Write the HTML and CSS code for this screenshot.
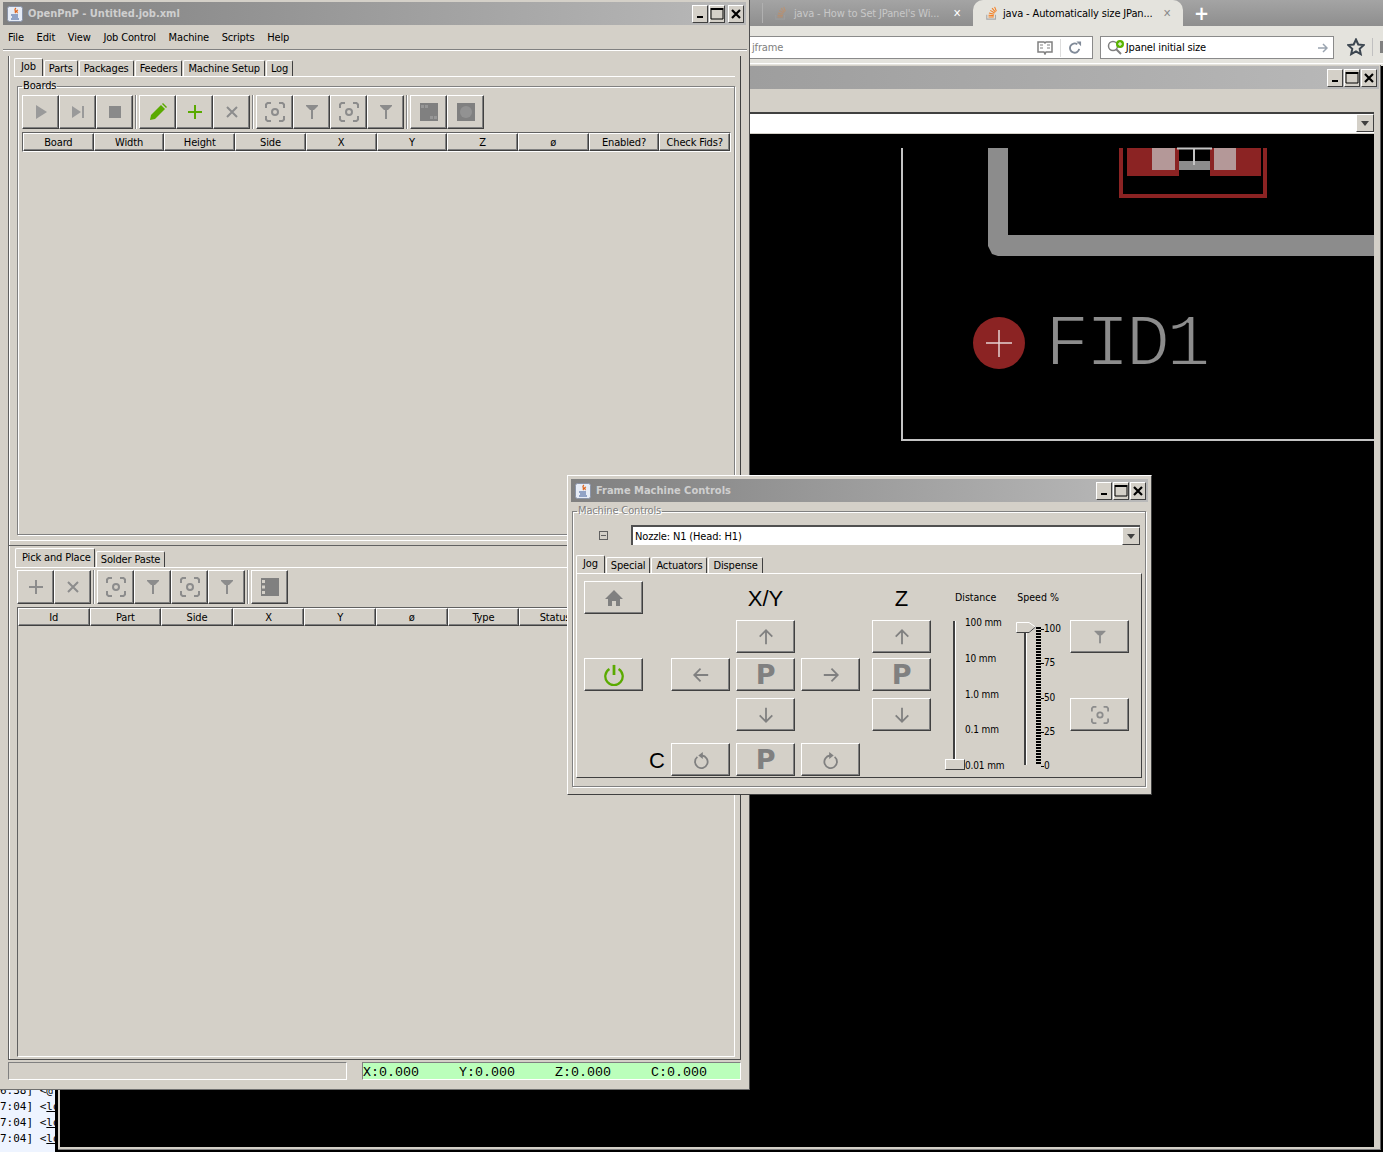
FILE: index.html
```html
<!DOCTYPE html>
<html lang="en">
<head>
    <meta charset="UTF-8">
    <title>OpenPnP - Untitled.job.xml</title>
    <link rel="stylesheet" href="styles.css">
</head>
<body>
    <!-- icon set -->
    <svg class="defs" width="0" height="0">
      <symbol id="i-play" viewBox="0 0 20 20"><path d="M5 3l11 7-11 7z" fill="#9a9a9a"/></symbol>
      <symbol id="i-step" viewBox="0 0 20 20"><path d="M4 4l9 6-9 6z" fill="#9a9a9a"/><rect x="14" y="4" width="2" height="12" fill="#9a9a9a"/></symbol>
      <symbol id="i-stop" viewBox="0 0 20 20"><rect x="4" y="4" width="12" height="12" fill="#8a8a8a"/></symbol>
      <symbol id="i-pencil" viewBox="0 0 20 20"><path d="M2 18l1-5L13 3l4 4L7 17z" fill="#5aaa00"/><path d="M14 2l1-1 4 4-1 1z" fill="#5aaa00"/></symbol>
      <symbol id="i-plus" viewBox="0 0 20 20"><path d="M10 3v14M3 10h14" stroke="#5aaa00" stroke-width="2" fill="none"/></symbol>
      <symbol id="i-plus-off" viewBox="0 0 20 20"><path d="M10 3v14M3 10h14" stroke="#8c8c8c" stroke-width="2" fill="none"/></symbol>
      <symbol id="i-x" viewBox="0 0 20 20"><path d="M5 5l10 10M15 5L5 15" stroke="#8c8c8c" stroke-width="2" fill="none"/></symbol>
      <symbol id="i-cam" viewBox="0 0 20 20"><path d="M1 6V2.500L2.500 1H6M14 1h3.500L19 2.500V6M19 14v3.500L17.500 19H14M6 19H2.500L1 17.500V14" stroke="#8c8c8c" stroke-width="2" fill="none"/><circle cx="10" cy="10" r="3" stroke="#8c8c8c" stroke-width="2" fill="none"/></symbol>
      <symbol id="i-nozzle" viewBox="0 0 20 20"><path d="M4 3h12v1l-4 4H8L4 4z" fill="#8c8c8c"/><rect x="9" y="7" width="2" height="10" fill="#8c8c8c"/></symbol>
      <symbol id="i-board" viewBox="0 0 20 20"><rect x="1" y="1" width="18" height="18" fill="#808080"/><path d="M2 3h3v3H2zM6 3h3v3H6zM11 14h3v3h-3zM15 14h3v3h-3z" fill="#979797"/></symbol>
      <symbol id="i-disc" viewBox="0 0 20 20"><rect x="1" y="1" width="18" height="18" fill="#808080"/><circle cx="10" cy="10" r="6" fill="#929292"/></symbol>
      <symbol id="i-film" viewBox="0 0 20 20"><rect x="1" y="1" width="18" height="18" fill="#808080"/><path d="M2 3h3v3H2zM2 8.500h3v3H2zM2 14h3v3H2z" fill="#d4d0c8"/></symbol>
      <symbol id="i-home" viewBox="0 0 20 20"><path d="M10 2L1 11h3v7h4v-5h4v5h4v-7h3z" fill="#808080"/></symbol>
      <symbol id="i-power" viewBox="0 0 24 24"><path d="M7 5.500a9.500 9.500 0 1 0 10 0" stroke="#5aaa00" stroke-width="2.500" fill="none"/><path d="M12 1v11" stroke="#5aaa00" stroke-width="3" fill="none"/></symbol>
      <symbol id="i-up" viewBox="0 0 20 20"><path d="M10 18V3M3 9.500L10 2.500l7 7" stroke="#808080" stroke-width="2" fill="none"/></symbol>
      <symbol id="i-down" viewBox="0 0 20 20"><path d="M10 2v15M3 10.500l7 7 7-7" stroke="#808080" stroke-width="2" fill="none"/></symbol>
      <symbol id="i-left" viewBox="0 0 20 20"><path d="M18 10H3M9.500 3L2.500 10l7 7" stroke="#808080" stroke-width="2" fill="none"/></symbol>
      <symbol id="i-right" viewBox="0 0 20 20"><path d="M2 10h15M10.500 3l7 7-7 7" stroke="#808080" stroke-width="2" fill="none"/></symbol>
      <symbol id="i-ccw" viewBox="0 0 20 20"><path d="M6 6.500a7 7 0 1 0 5-1.500" stroke="#808080" stroke-width="2" fill="none"/><path d="M12 1v8L7 5z" fill="#808080"/></symbol>
      <symbol id="i-cw" viewBox="0 0 20 20"><path d="M14 6.500a7 7 0 1 1-5-1.500" stroke="#808080" stroke-width="2" fill="none"/><path d="M8 1v8l5-4z" fill="#808080"/></symbol>
      <symbol id="i-min" viewBox="0 0 14 14"><rect x="4" y="9" width="6" height="2" fill="#000"/></symbol>
      <symbol id="i-max" viewBox="0 0 14 14"><path d="M1 1.500h12M1 1v11h12V1" stroke="#000" stroke-width="1" fill="none"/><rect x="1" y="1" width="12" height="2" fill="#000"/></symbol>
      <symbol id="i-close" viewBox="0 0 14 14"><path d="M3 3l8 8M11 3l-8 8" stroke="#000" stroke-width="2.200" fill="none"/></symbol>
      <symbol id="i-java" viewBox="0 0 16 16"><rect x="0.500" y="0.500" width="15" height="15" rx="2" fill="#e6ecf6" stroke="#8a94a8"/><path d="M9 2c-3 2 1 3-1 5M11 4c-3 1 0 2-1 3" stroke="#e0641a" stroke-width="1.300" fill="none"/><path d="M4 9h7M5 11h6M4 13h8" stroke="#3c5a96" stroke-width="1" fill="none"/></symbol>
      <symbol id="i-so" viewBox="0 0 16 16"><path d="M2 10v5h10v-5" stroke="#a8a8a8" stroke-width="1.200" fill="none"/><path d="M4 12.500h6M4 10.500l6 .5M4.500 8l6 1.500M6 5l5 3M8 2.500l4 4.500M11 1l2 5" stroke="#f48024" stroke-width="1.200" fill="none"/></symbol>
    </svg>

    <!-- browser behind everything -->
    <div class="browser">
      <div class="tab-strip">
        <span class="tab-sep"></span>
        <svg class="so-dim"><use href="#i-so"/></svg>
        <span class="tab-title-dim">java - How to Set JPanel's Wi...</span>
        <span class="tab-x-white">✕</span>
        <div class="tab-active">
          <svg class="so-icon"><use href="#i-so"/></svg>
          <span class="tab-title">java - Automatically size JPan...</span>
          <span class="tab-x-gray">✕</span>
        </div>
        <span class="tab-plus">+</span>
      </div>
      <div class="nav-bar">
        <div class="url-box">
          <span class="url-text">jframe</span>
          <svg class="url-reader" viewBox="0 0 16 14"><path d="M1 1h6l1 1 1-1h6v10H9l-1 2-1-2H1z" fill="none" stroke="#808080" stroke-width="1.500"/><path d="M3 4h3M3 7h3M10 4h3M10 7h3" stroke="#808080"/></svg>
          <span class="url-sep"></span>
          <svg class="url-reload" viewBox="0 0 14 14"><path d="M11 8a5 5 0 1 1-2-5" fill="none" stroke="#808a98" stroke-width="2"/><path d="M8 0h5v5z" fill="#808a98"/></svg>
        </div>
        <div class="search-box">
          <svg class="search-icon" viewBox="0 0 18 16"><circle cx="6" cy="6" r="4.500" fill="none" stroke="#808080" stroke-width="1.500"/><path d="M9 9l5 5" stroke="#808080" stroke-width="2"/><circle cx="13" cy="4" r="4" fill="#5ab400"/><path d="M13 2v4M11 4h4" stroke="#fff"/></svg>
          <span class="search-text">Jpanel initial size</span>
          <svg class="search-go" viewBox="0 0 10 10"><path d="M0 5h8M5 1l4 4-4 4" fill="none" stroke="#9aa4b0" stroke-width="1.500"/></svg>
        </div>
        <svg class="star" viewBox="0 0 18 18"><path d="M9 1.500l2.300 5 5.400.6-4 3.700 1.100 5.400L9 13.500l-4.800 2.700 1.100-5.400-4-3.700 5.400-.6z" fill="none" stroke="#3c4650" stroke-width="2"/></svg>
        <span class="nav-sep"></span>
        <span class="nav-stub"></span>
      </div>
    </div>

    <!-- irc log peeking out at the bottom left -->
    <div class="irc-log">
      <div>6:38] &lt;@</div>
      <div>7:04] &lt;<u>lo</u></div>
      <div>7:04] &lt;<u>lo</u></div>
      <div>7:04] &lt;<u>lo</u></div>
    </div>

    <!-- window behind with the pcb view -->
    <div class="back-win">
      <div class="title-bar back-title">
        <span class="win-buttons">
          <span class="wbtn"><svg><use href="#i-min"/></svg></span>
          <span class="wbtn"><svg><use href="#i-max"/></svg></span>
          <span class="wbtn"><svg><use href="#i-close"/></svg></span>
        </span>
      </div>
      <div class="back-combo"><span class="combo-arrow"></span></div>
      <svg class="pcb" viewBox="60 134 1314 1013">
        <path d="M902 148V440H1374" fill="none" stroke="#c4c4c4" stroke-width="2"/>
        <path d="M988 148h20v87h366v21H998l-6-2-4-8z" fill="#8c8c8c"/>
        <path d="M1121 148v48h144v-48" fill="none" stroke="#8b2323" stroke-width="4"/>
        <rect x="1127" y="148" width="52" height="28" fill="#8b2323"/>
        <rect x="1210" y="148" width="51" height="28" fill="#8b2323"/>
        <rect x="1152" y="148" width="23" height="22" fill="#b49898"/>
        <rect x="1214" y="148" width="22" height="22" fill="#b49898"/>
        <rect x="1175" y="148" width="4" height="13" fill="#8b2323"/>
        <rect x="1210" y="148" width="4" height="13" fill="#8b2323"/>
        <rect x="1179" y="161" width="31" height="9" fill="#8c8c8c"/>
        <path d="M1177 148.500h35M1194 148v17" stroke="#c4c4c4" stroke-width="2" fill="none"/>
        <circle cx="999" cy="343" r="26" fill="#8b2323"/>
        <path d="M986 343h26M999 330v27" stroke="#e6d2d2" stroke-width="1.500" fill="none"/>
        <text class="fid" x="1045" y="365">FID1</text>
      </svg>
    </div>

    <!-- main window -->
    <div class="main-win">
      <div class="title-bar">
        <svg class="java-icon"><use href="#i-java"/></svg>
        <span class="title-text">OpenPnP - Untitled.job.xml</span>
        <span class="win-buttons">
          <span class="wbtn"><svg><use href="#i-min"/></svg></span>
          <span class="wbtn"><svg><use href="#i-max"/></svg></span>
          <span class="wbtn wbtn-close"><svg><use href="#i-close"/></svg></span>
        </span>
      </div>
      <div class="menu-bar">
        <span>File</span><span>Edit</span><span>View</span><span>Job Control</span><span>Machine</span><span>Scripts</span><span>Help</span>
      </div>

      <div class="split">
        <div class="pane pane-top">
          <div class="tabs">
            <span class="tab tab-on">Job</span><span class="tab">Parts</span><span class="tab">Packages</span><span class="tab">Feeders</span><span class="tab">Machine Setup</span><span class="tab">Log</span>
          </div>
          <div class="tab-panel">
            <fieldset class="titled">
              <legend>Boards</legend>
              <div class="toolbar">
                <span class="tbtn"><svg><use href="#i-play"/></svg></span>
                <span class="tbtn"><svg><use href="#i-step"/></svg></span>
                <span class="tbtn"><svg><use href="#i-stop"/></svg></span>
                <span class="tsep"></span>
                <span class="tbtn"><svg><use href="#i-pencil"/></svg></span>
                <span class="tbtn"><svg><use href="#i-plus"/></svg></span>
                <span class="tbtn"><svg><use href="#i-x"/></svg></span>
                <span class="tsep"></span>
                <span class="tbtn"><svg><use href="#i-cam"/></svg></span>
                <span class="tbtn"><svg><use href="#i-nozzle"/></svg></span>
                <span class="tbtn"><svg><use href="#i-cam"/></svg></span>
                <span class="tbtn"><svg><use href="#i-nozzle"/></svg></span>
                <span class="tsep"></span>
                <span class="tbtn"><svg><use href="#i-board"/></svg></span>
                <span class="tbtn"><svg><use href="#i-disc"/></svg></span>
              </div>
              <div class="table-pane">
                <div class="thead">
                  <span>Board</span><span>Width</span><span>Height</span><span>Side</span><span>X</span><span>Y</span><span>Z</span><span>ø</span><span>Enabled?</span><span>Check Fids?</span>
                </div>
              </div>
            </fieldset>
          </div>
        </div>

        <div class="divider"></div>

        <div class="pane pane-bottom">
          <div class="tabs tabs-low">
            <span class="tab tab-on">Pick and Place</span><span class="tab">Solder Paste</span>
          </div>
          <div class="tab-panel tab-panel-low">
            <div class="toolbar">
              <span class="tbtn"><svg><use href="#i-plus-off"/></svg></span>
              <span class="tbtn"><svg><use href="#i-x"/></svg></span>
              <span class="tsep"></span>
              <span class="tbtn"><svg><use href="#i-cam"/></svg></span>
              <span class="tbtn"><svg><use href="#i-nozzle"/></svg></span>
              <span class="tbtn"><svg><use href="#i-cam"/></svg></span>
              <span class="tbtn"><svg><use href="#i-nozzle"/></svg></span>
              <span class="tsep"></span>
              <span class="tbtn"><svg><use href="#i-film"/></svg></span>
            </div>
            <div class="table-pane">
              <div class="thead">
                <span>Id</span><span>Part</span><span>Side</span><span>X</span><span>Y</span><span>ø</span><span>Type</span><span>Status</span><span>Check Fids?</span><span>Enabled?</span>
              </div>
            </div>
          </div>
        </div>
      </div>

      <div class="status-bar">
        <div class="status-msg"></div>
        <div class="status-dro">X:0.000     Y:0.000     Z:0.000     C:0.000</div>
      </div>
    </div>

    <!-- floating machine controls -->
    <div class="ctl-win">
      <div class="title-bar">
        <svg class="java-icon"><use href="#i-java"/></svg>
        <span class="title-text">Frame Machine Controls</span>
        <span class="win-buttons">
          <span class="wbtn"><svg><use href="#i-min"/></svg></span>
          <span class="wbtn"><svg><use href="#i-max"/></svg></span>
          <span class="wbtn"><svg><use href="#i-close"/></svg></span>
        </span>
      </div>
      <fieldset class="titled titled-ctl">
        <legend>Machine Controls</legend>
        <div class="combo-row">
          <span class="collapse-box"></span>
          <div class="combo">Nozzle: N1 (Head: H1)<span class="combo-arrow"></span></div>
        </div>
        <div class="tabs tabs-ctl">
          <span class="tab tab-on">Jog</span><span class="tab">Special</span><span class="tab">Actuators</span><span class="tab">Dispense</span>
        </div>
        <div class="jog-panel">
          <span class="jbtn at-home"><svg class="ic-20"><use href="#i-home"/></svg></span>
          <span class="axis at-xy">X/Y</span>
          <span class="axis at-z">Z</span>

          <span class="jbtn at-xy-up"><svg class="ic-18"><use href="#i-up"/></svg></span>
          <span class="jbtn at-z-up"><svg class="ic-18"><use href="#i-up"/></svg></span>

          <span class="jbtn at-power"><svg class="ic-22"><use href="#i-power"/></svg></span>
          <span class="jbtn at-xy-left"><svg class="ic-18"><use href="#i-left"/></svg></span>
          <span class="jbtn at-xy-park jp">P</span>
          <span class="jbtn at-xy-right"><svg class="ic-18"><use href="#i-right"/></svg></span>
          <span class="jbtn at-z-park jp">P</span>

          <span class="jbtn at-xy-down"><svg class="ic-18"><use href="#i-down"/></svg></span>
          <span class="jbtn at-z-down"><svg class="ic-18"><use href="#i-down"/></svg></span>

          <span class="axis at-c">C</span>
          <span class="jbtn at-c-ccw"><svg class="ic-18"><use href="#i-ccw"/></svg></span>
          <span class="jbtn at-c-park jp">P</span>
          <span class="jbtn at-c-cw"><svg class="ic-18"><use href="#i-cw"/></svg></span>

          <div class="sliders">
            <div class="slider-heads"><span>Distance</span><span>Speed %</span></div>
            <div class="slider-body">
              <div class="dist-slider">
                <span class="track"></span>
                <span class="thumb-h"></span>
                <div class="dist-labels"><span>100 mm</span><span>10 mm</span><span>1.0 mm</span><span>0.1 mm</span><span>0.01 mm</span></div>
              </div>
              <div class="speed-slider">
                <span class="track"></span>
                <svg class="thumb-v" viewBox="0 0 20 11"><path d="M0.500 0.500H13L19.500 5 13 10.500H0.500z" fill="#d4d0c8" stroke="#fff"/><path d="M0.500 10.500H13L19.500 5" fill="none" stroke="#404040"/></svg>
                <span class="ticks"></span>
                <div class="speed-labels"><span>100</span><span>75</span><span>50</span><span>25</span><span>0</span></div>
              </div>
            </div>
          </div>

          <span class="jbtn at-side-nozzle"><svg class="ic-18"><use href="#i-nozzle"/></svg></span>
          <span class="jbtn at-side-cam"><svg class="ic-18"><use href="#i-cam"/></svg></span>
        </div>
      </fieldset>
    </div>
</body>
</html>
```

FILE: styles.css
```css
* {
    box-sizing: border-box;
}
body {
    margin: 0;
    width: 1383px;
    height: 1152px;
    position: relative;
    overflow: hidden;
    background-color: #000;
    font-family: "DejaVu Sans Condensed", "DejaVu Sans", sans-serif;
    font-stretch: condensed;
    font-size: 11px;
    letter-spacing: -0.15px;
    color: #000;
}
.defs {
    position: absolute;
}

/* browser chrome */
.browser {
    position: absolute;
    left: 0;
    top: 0;
    width: 1383px;
    height: 66px;
    display: flex;
    flex-direction: column;
    background-color: #e4e3dd;
}
.tab-strip {
    height: 26px;
    display: flex;
    align-items: center;
    padding-left: 762px;
    background: linear-gradient(#a4a4a4, #8e8e8e);
}
.tab-sep {
    width: 1px;
    height: 20px;
    background-color: #b0b0b0;
}
.so-dim {
    width: 14px;
    height: 16px;
    margin-left: 11px;
    opacity: 0.35;
}
.tab-title-dim {
    width: 150px;
    margin-left: 6px;
    color: #c8c8c8;
    white-space: nowrap;
}
.tab-x-white {
    width: 12px;
    margin-left: 9px;
    color: #fff;
    font-size: 11px;
    font-weight: bold;
}
.tab-active {
    width: 210px;
    height: 26px;
    margin-left: 8px;
    display: flex;
    align-items: center;
    padding-left: 12px;
    border-radius: 10px 10px 0 0;
    background-color: #e4e3dd;
}
.so-icon {
    width: 14px;
    height: 16px;
}
.tab-title {
    width: 152px;
    margin-left: 4px;
    white-space: nowrap;
}
.tab-x-gray {
    margin-left: 8px;
    color: #8a8a8a;
    font-weight: bold;
}
.tab-plus {
    margin-left: 11px;
    color: #fff;
    font-size: 20px;
    font-weight: bold;
    line-height: 20px;
}
.nav-bar {
    height: 38px;
    display: flex;
    align-items: flex-start;
    padding: 10px 0 0 700px;
    border-bottom: 1px solid #fff;
}
.url-box, .search-box {
    height: 23px;
    display: flex;
    align-items: center;
    background-color: #fff;
    border: 1px solid #8a8a8a;
}
.url-box {
    width: 394px;
    padding-left: 51px;
}
.url-text {
    color: #808080;
    width: 285px;
}
.url-reader {
    width: 16px;
    height: 14px;
}
.url-sep {
    width: 1px;
    height: 18px;
    margin-left: 7px;
    background-color: #ddd;
}
.url-reload {
    width: 13px;
    height: 14px;
    margin-left: 8px;
}
.search-box {
    width: 235px;
    margin-left: 7px;
    padding-left: 6px;
}
.search-icon {
    width: 18px;
    height: 16px;
}
.search-text {
    width: 192px;
    margin-left: 1px;
}
.search-go {
    width: 10px;
    height: 10px;
}
.star {
    width: 18px;
    height: 18px;
    margin: 2px 0 0 13px;
}
.nav-sep {
    width: 1px;
    height: 18px;
    margin: 2px 0 0 7px;
    background-color: #c0c0c0;
}
.nav-stub {
    width: 3px;
    height: 12px;
    margin: 5px 0 0 7px;
    background-color: #808080;
}

/* log strip */
.irc-log {
    position: absolute;
    left: 0;
    top: 1083px;
    width: 55px;
    height: 69px;
    overflow: hidden;
    background-color: #eef4ff;
    font-family: "DejaVu Sans Mono", monospace;
    font-stretch: normal;
    font-size: 11px;
    letter-spacing: 0;
    line-height: 16px;
    white-space: nowrap;
}

/* back window */
.back-win {
    position: absolute;
    left: 58px;
    top: 65px;
    width: 1323px;
    height: 1085px;
    display: flex;
    flex-direction: column;
    padding: 1px 6px 2px 2px;
    background-color: #d4d0c8;
    border-right: 1px solid #606060;
    border-bottom: 1px solid #808080;
}
.title-bar {
    height: 23px;
    flex: none;
    display: flex;
    align-items: center;
    padding-left: 4px;
    background: linear-gradient(to right, #808080, #b9b9b9);
}
.back-title {
    margin-right: -5px;
}
.win-buttons {
    margin-left: auto;
    margin-right: 2px;
    display: flex;
    gap: 1px;
}
.wbtn {
    width: 16px;
    height: 18px;
    display: flex;
    align-items: center;
    justify-content: center;
    border: 1px solid;
    border-color: #fff #404040 #404040 #fff;
    background-color: #d4d0c8;
}
.wbtn svg {
    width: 14px;
    height: 14px;
}
.wbtn-close {
    margin-left: 2px;
}
.back-combo {
    height: 22px;
    flex: none;
    margin-top: 23px;
    display: flex;
    justify-content: flex-end;
    background-color: #fff;
    border-top: 2px solid #404040;
    border-bottom: 1px solid #d4d0c8;
}
.combo-arrow {
    width: 18px;
    height: 18px;
    display: flex;
    align-items: center;
    justify-content: center;
    background-color: #d4d0c8;
    border: 1px solid;
    border-color: #fff #404040 #404040 #fff;
}
.combo-arrow::after {
    content: "";
    border-left: 4px solid transparent;
    border-right: 4px solid transparent;
    border-top: 5px solid #404040;
}
.pcb {
    flex: 1;
    display: block;
    width: 100%;
    min-height: 0;
    background-color: #000;
}
/* black outline thins the glyphs down to the plotted stroke width */
.fid {
    font-family: "Liberation Mono", monospace;
    font-stretch: normal;
    font-size: 74px;
    fill: #8c8c8c;
    stroke: #000;
    stroke-width: 2px;
    letter-spacing: -4px;
}

/* main window */
.main-win {
    position: absolute;
    left: 0;
    top: 0;
    width: 750px;
    height: 1090px;
    padding: 2px 3px 0 3px;
    background-color: #d4d0c8;
    border-right: 1px solid #505050;
    border-bottom: 1px solid #707070;
}
.java-icon {
    width: 16px;
    height: 16px;
    flex: none;
}
.title-text {
    margin-left: 5px;
    color: #cfcfcf;
    font-weight: bold;
    font-size: 11px;
    letter-spacing: 0;
    white-space: nowrap;
}
.menu-bar {
    height: 25px;
    display: flex;
    align-items: center;
    gap: 12.700px;
    padding-left: 5px;
    margin-right: -1px;
    border-bottom: 1px solid #808080;
    box-shadow: 0 1px 0 #fff;
}
.split {
    height: 1004px;
    margin: 6px 5px 0 5px;
    display: flex;
    flex-direction: column;
    border-left: 1px solid #606060;
    border-right: 1px solid #404040;
    border-bottom: 1px solid #505050;
    box-shadow: inset 1px 0 0 #fff;
}
.pane {
    display: flex;
    flex-direction: column;
}
.pane-top {
    height: 484px;
    padding: 2px 5px 0 5px;
}
.divider {
    height: 6px;
    flex: none;
    border-top: 1px solid #fff;
    border-bottom: 1px solid #606060;
}
.pane-bottom {
    flex: 1;
    min-height: 0;
    padding: 2px 3px 2px 6px;
}
.tabs {
    height: 18px;
    flex: none;
    display: flex;
    align-items: flex-end;
}
.tab {
    height: 16px;
    padding: 0 4px;
    margin-right: 1px;
    line-height: 16px;
    border: 1px solid;
    border-width: 1px 1px 0 1px;
    border-color: #fff #404040 #fff #fff;
    border-radius: 2px 2px 0 0;
    white-space: nowrap;
}
.tab-on {
    height: 18px;
    padding: 0 6px;
}
.tab-panel {
    flex: 1;
    min-height: 0;
    display: flex;
    flex-direction: column;
    padding: 0 0 5px 3px;
    border-top: 1px solid #fff;
}
.titled {
    flex: 1;
    min-height: 0;
    min-width: 0;
    display: flex;
    flex-direction: column;
    margin: 2px 0 0 0;
    padding: 2px 4px 0 4px;
    border: 1px solid #808080;
    box-shadow: inset 1px 1px 0 #fff, 1px 1px 0 #fff;
}
.titled legend {
    padding: 0 1px;
    margin-left: 0;
    line-height: 14px;
}
.toolbar {
    height: 34px;
    flex: none;
    display: flex;
}
.tbtn {
    width: 37px;
    height: 34px;
    display: flex;
    align-items: center;
    justify-content: center;
    border: 1px solid;
    border-color: #fff #404040 #404040 #fff;
    box-shadow: inset -1px -1px 0 #808080;
}
.tbtn svg {
    width: 20px;
    height: 20px;
}
.tsep {
    width: 6px;
    flex: none;
    background: linear-gradient(to right, transparent 2px, #808080 2px, #808080 3px, #fff 3px, #fff 4px, transparent 4px);
}
.table-pane {
    flex: 1;
    min-height: 0;
    margin: 3px -1px 0 0;
    border: 1px solid;
    border-color: #606060 #fff #fff #606060;
}
.thead {
    display: flex;
    height: 18px;
}
.thead span {
    flex: 1 1 0;
    min-width: 0;
    text-align: center;
    line-height: 17px;
    white-space: nowrap;
    border: 1px solid;
    border-color: #fff #404040 #404040 #fff;
    box-shadow: inset -1px -1px 0 #808080;
}

/* lower pane */
.tabs-low {
    height: 19px;
}
.tabs-low .tab-on {
    height: 19px;
    padding: 0 3px 0 6px;
    line-height: 17px;
}
.tab-panel-low {
    padding: 2px 3px 0 2px;
}
.status-bar {
    display: flex;
    gap: 15px;
    height: 18px;
    margin: 2px 5px 0 5px;
}
.status-msg, .status-dro {
    border: 1px solid;
    border-color: #808080 #fff #fff #808080;
}
.status-msg {
    width: 339px;
}
.status-dro {
    flex: 1;
    background-color: #bbffbb;
    font-family: "Liberation Mono", monospace;
    font-stretch: normal;
    font-size: 13.330px;
    letter-spacing: 0;
    line-height: 19px;
    white-space: pre;
}

/* machine controls window */
.ctl-win {
    position: absolute;
    left: 567px;
    top: 475px;
    width: 585px;
    height: 320px;
    padding: 3px 3px 0 3px;
    background-color: #d4d0c8;
    border: 1px solid;
    border-color: #fff #404040 #404040 #fff;
    display: flex;
    flex-direction: column;
}
.titled-ctl {
    margin: 2px 2px 7px 1px;
    padding: 7px 3px 8px 3px;
}
.titled-ctl legend {
    color: #808080;
    text-shadow: 1px 1px 0 #fff;
    margin-left: 1px;
}
.combo-row {
    height: 20px;
    flex: none;
    display: flex;
    align-items: center;
    padding-left: 23px;
}
.collapse-box {
    width: 9px;
    height: 9px;
    border: 1px solid #606060;
    background: linear-gradient(#606060, #606060) center / 5px 1px no-repeat;
}
.combo {
    width: 509px;
    height: 20px;
    margin-left: 23px;
    display: flex;
    align-items: center;
    justify-content: space-between;
    padding-left: 2px;
    background-color: #fff;
    border-top: 2px solid #505050;
    border-left: 2px solid #505050;
}
.tabs-ctl {
    height: 18px;
    margin-top: 10px;
}
.jog-panel {
    flex: 1;
    min-height: 0;
    display: grid;
    grid-template-columns: 59px 28px 59px 6px 59px 6px 59px 12px 59px 139px 59px;
    grid-template-rows: 39px 38px 40px 45px 33px;
    padding: 7px 0 0 7px;
    border: 1px solid;
    border-color: #fff #404040 #404040 #fff;
}
.jbtn {
    height: 33px;
    display: flex;
    align-items: center;
    justify-content: center;
    border: 1px solid;
    border-color: #fff #404040 #404040 #fff;
    box-shadow: inset -1px -1px 0 #808080;
}
.ic-18 {
    width: 18px;
    height: 18px;
}
.ic-20 {
    width: 20px;
    height: 20px;
}
.ic-22 {
    width: 22px;
    height: 22px;
}
.jp {
    color: #808080;
    font-family: "DejaVu Sans", sans-serif;
    font-stretch: normal;
    font-weight: bold;
    font-size: 27px;
    line-height: 30px;
}
.axis {
    font-family: "Liberation Sans", sans-serif;
    font-stretch: normal;
    font-size: 22px;
    letter-spacing: 0;
    text-align: center;
    line-height: 35px;
}
.at-home { grid-area: 1 / 1; }
.at-xy { grid-area: 1 / 5; }
.at-z { grid-area: 1 / 9; }
.at-xy-up { grid-area: 2 / 5; }
.at-z-up { grid-area: 2 / 9; }
.at-power { grid-area: 3 / 1; }
.at-xy-left { grid-area: 3 / 3; }
.at-xy-park { grid-area: 3 / 5; }
.at-xy-right { grid-area: 3 / 7; }
.at-z-park { grid-area: 3 / 9; }
.at-xy-down { grid-area: 4 / 5; }
.at-z-down { grid-area: 4 / 9; }
.at-c { grid-area: 5 / 2; margin-right: 6px; text-align: right; }
.at-c-ccw { grid-area: 5 / 3; }
.at-c-park { grid-area: 5 / 5; }
.at-c-cw { grid-area: 5 / 7; }
.at-side-nozzle { grid-area: 2 / 11; }
.at-side-cam { grid-area: 4 / 11; }

/* sliders in the jog panel */
.sliders {
    grid-area: 1 / 10 / 6 / 11;
    display: flex;
    flex-direction: column;
    font-size: 10px;
}
.slider-heads {
    height: 32px;
    padding: 9px 0 0 24px;
    display: flex;
    gap: 21px;
    line-height: 14px;
    font-size: 10.500px;
    letter-spacing: 0;
}
.slider-body {
    position: relative;
    display: flex;
    height: 165px;
}
.dist-slider {
    width: 85px;
    position: relative;
    height: 165px;
    padding: 5px 0 0 34px;
}
.dist-labels {
    height: 157px;
    display: flex;
    flex-direction: column;
    justify-content: space-between;
    line-height: 14px;
}
.track {
    position: absolute;
    width: 2px;
    background-color: #404040;
    box-shadow: 1px 0 0 #fff;
}
.dist-slider .track {
    left: 22px;
    top: 10px;
    height: 140px;
}
.thumb-h {
    position: absolute;
    left: 14px;
    top: 148px;
    width: 20px;
    height: 11px;
    background-color: #d4d0c8;
    border: 1px solid;
    border-color: #fff #404040 #404040 #fff;
}
.speed-slider {
    position: relative;
    flex: 1;
    height: 165px;
}
.speed-slider .track {
    left: 8px;
    top: 20px;
    height: 134px;
}
.thumb-v {
    position: absolute;
    left: 0;
    top: 11px;
    width: 20px;
    height: 11px;
}
.ticks {
    position: absolute;
    left: 20px;
    top: 16px;
    width: 5px;
    height: 138px;
    background: repeating-linear-gradient(#000 0 2px, transparent 2px 3px);
}
.speed-labels {
    position: absolute;
    left: 28px;
    top: 11px;
    height: 151px;
    display: flex;
    flex-direction: column;
    justify-content: space-between;
    line-height: 14px;
}
.speed-labels span {
    position: relative;
}
.speed-labels span::before {
    content: "";
    position: absolute;
    left: -3px;
    top: 7px;
    width: 3px;
    height: 1px;
    background-color: #000;
}
```
